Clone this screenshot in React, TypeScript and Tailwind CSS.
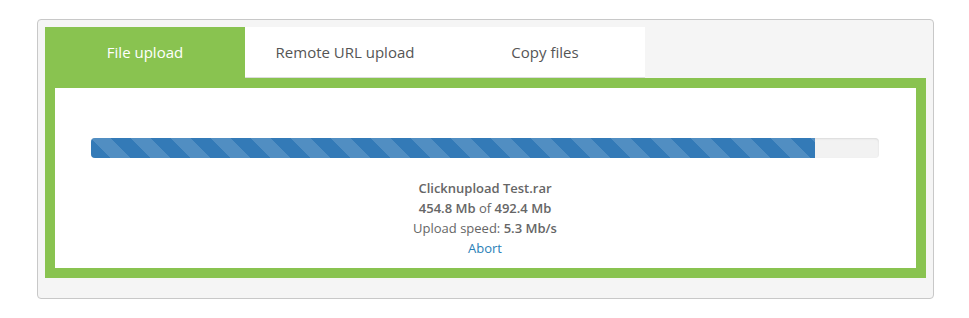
const stripes =
  "bg-[linear-gradient(45deg,rgba(255,255,255,0.15)_25%,transparent_25%,transparent_50%,rgba(255,255,255,0.15)_50%,rgba(255,255,255,0.15)_75%,transparent_75%,transparent)] bg-[length:40px_40px]";

export default function App() {
  const tabs = ["File upload", "Remote URL upload", "Copy files"];
  const active = 0;

  return (
    <div className="min-h-[318px] bg-white pl-[37px] pt-[19px] font-['Open_Sans',sans-serif]">
      <div className="w-[897px] rounded-[4px] border border-[#c8c8c8] bg-[#f5f5f5] px-[7px] pb-[20px] pt-[7px]">
        {/* Tabs */}
        <div className="flex">
          {tabs.map((t, i) => (
            <div
              key={t}
              className={
                i === active
                  ? "flex h-[51px] w-[200px] items-center justify-center bg-[#89c350] text-[15px] text-white"
                  : "flex h-[51px] w-[200px] items-center justify-center border-b border-[#dcdcdc] bg-white text-[15px] text-[#555]"
              }
            >
              {t}
            </div>
          ))}
        </div>

        {/* Panel */}
        <div className="border-[10px] border-[#89c350] bg-white pb-[10px] pl-[36px] pr-[37px] pt-[50px]">
          <div className="h-[20px] overflow-hidden rounded-[4px] bg-[#f2f2f2] shadow-[inset_0_1px_2px_rgba(0,0,0,0.1)]">
            <div className={`h-full w-[91.9%] bg-[#337ab7] ${stripes}`} />
          </div>

          <div className="mt-[20px] text-center text-[13px] leading-[20px] text-[#666]">
            <div className="font-semibold">Clicknupload Test.rar</div>
            <div>
              <span className="font-semibold">454.8 Mb</span> of{" "}
              <span className="font-semibold">492.4 Mb</span>
            </div>
            <div>
              Upload speed: <span className="font-semibold">5.3 Mb/s</span>
            </div>
            <div className="text-[#2a7fb8]">Abort</div>
          </div>
        </div>
      </div>
    </div>
  );
}
